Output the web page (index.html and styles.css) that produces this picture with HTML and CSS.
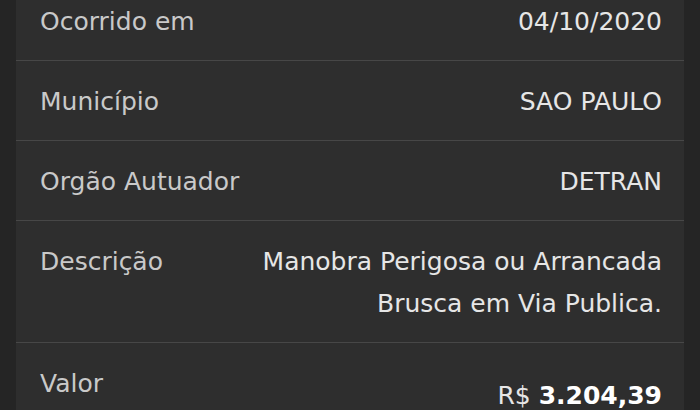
FILE: index.html
```html
<!DOCTYPE html>
<html lang="pt-BR">
<head>
    <meta charset="UTF-8">
    <meta name="viewport" content="width=device-width, initial-scale=1.0">
    <title>Detalhes da Infração</title>
    <link rel="stylesheet" href="styles.css">
</head>
<body>
    <div class="card">
        <div class="row first">
            <span class="label">Ocorrido em</span>
            <span class="value">04/10/2020</span>
        </div>
        <div class="row">
            <span class="label">Município</span>
            <span class="value">SAO PAULO</span>
        </div>
        <div class="row">
            <span class="label">Orgão Autuador</span>
            <span class="value">DETRAN</span>
        </div>
        <div class="row">
            <span class="label">Descrição</span>
            <span class="value desc">Manobra Perigosa ou Arrancada Brusca em Via Publica.</span>
        </div>
        <div class="row">
            <span class="label">Valor</span>
            <span class="value price">R$ <b>3.204,39</b></span>
        </div>
    </div>
</body>
</html>
```

FILE: styles.css
```css
body { margin: 0; background: #252525; font-family: "DejaVu Sans", sans-serif; overflow: hidden; }
.card { background: #2e2e2e; margin: -19px 16px 0 16px; border-radius: 14px; }
.row { display: flex; justify-content: space-between; align-items: flex-start; padding: 20px 22px 17px 24px; border-bottom: 1px solid #474747; font-size: 25px; line-height: 42px; }
.row:last-child { border-bottom: none; }
.label { color: #c9c9c9; white-space: nowrap; }
.value { color: #e6e6e6; text-align: right; }
.desc { max-width: 410px; }
.price { margin-top: 12px; }
.price b { color: #fff; font-weight: 700; }
```
